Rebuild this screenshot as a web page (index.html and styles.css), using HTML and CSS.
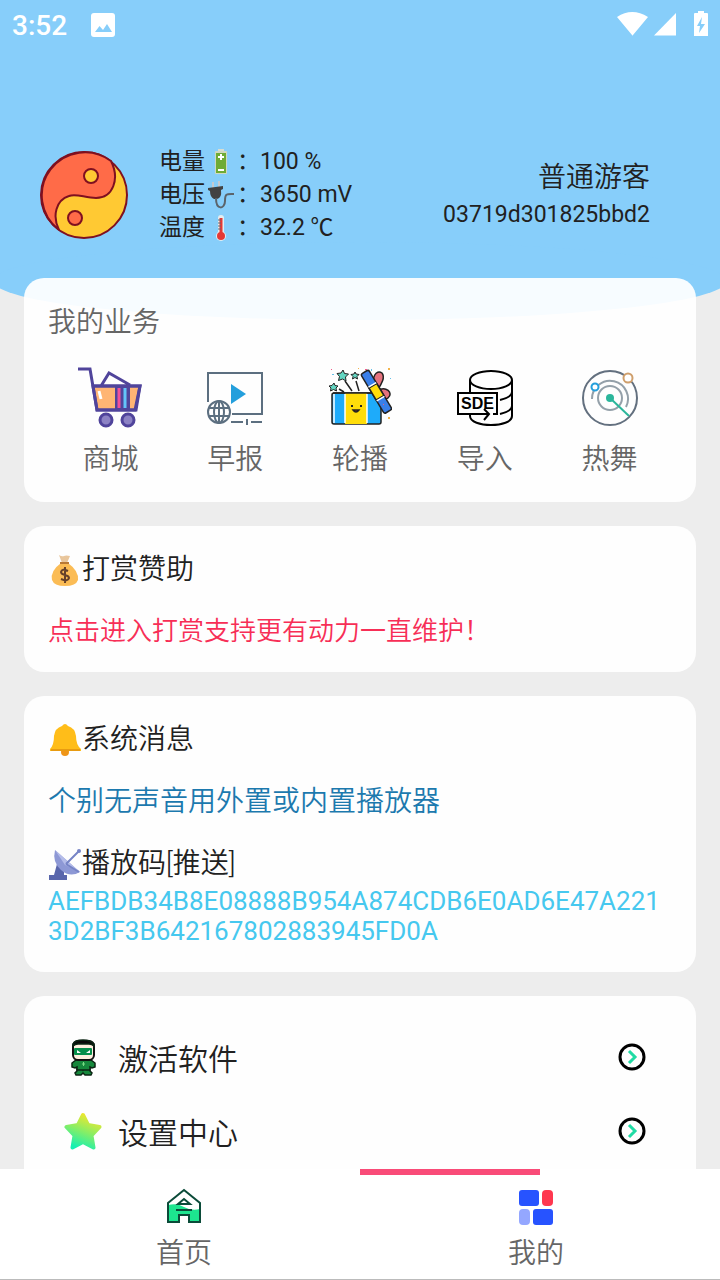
FILE: index.html
```html
<!DOCTYPE html>
<html lang="zh-CN">
<head>
    <meta charset="UTF-8">
    <meta name="viewport" content="width=device-width, initial-scale=1">
    <title>我的</title>
    <link rel="stylesheet" href="styles.css">
</head>
<body>
<main class="page">
    <header class="top">
        <div class="statusbar">
            <span class="clock">3:52</span>
            <svg class="pic" viewBox="0 0 24 24" width="24" height="24"><rect width="24" height="24" rx="3" fill="#fff"/><path d="M4 19l4.500-6 3.500 4 4-6 5 8z" fill="#87cefa"/></svg>
            <svg class="signals" viewBox="0 0 92 28" width="92" height="28" fill="#fff"><path d="M1 6Q16-4 32 6L17 24Q16.500 25 16 24z"/><path d="M60 2v22.500H38z"/><path d="M79 2h3V0h6v2h3q1 0 1 1v22H78V3q0-1 1-1z"/><path d="M86 6l-5 9h3l-1 7 6-9h-4l1-7z" fill="#87cefa"/></svg>
        </div>
        <div class="profile">
            <svg class="avatar" viewBox="0 0 88 88" width="88" height="88" stroke="#7f1020" stroke-width="2">
                <circle cx="44" cy="44" r="43" fill="#ffc933"/>
                <path d="M19 79A43 43 0 1 1 71 10C80 28 73 47 56 47C45 47 36 42 29 45C16 49 12 65 19 79z" fill="#ff6b48"/>
                <circle cx="51" cy="25" r="7" fill="#ffc933"/>
                <circle cx="35" cy="67" r="7" fill="#ff6b48"/>
            </svg>
            <dl class="stats">
                <div><dt>电量<svg viewBox="0 0 28 28" width="32" height="28"><rect x="11" y="1" width="6" height="3" fill="#d8ddd0"/><rect x="8" y="3" width="12" height="23" rx="1" fill="#cfd8c0"/><rect x="9" y="5" width="10" height="20" fill="#6fab35"/><path d="M14 6v6M11 9h6M11 22h6" stroke="#fff" stroke-width="2"/></svg>：</dt><dd>100 %</dd></div>
                <div><dt>电压<svg viewBox="0 0 28 28" width="32" height="28" fill="none"><path d="M6 1v7M12 0v7" stroke="#c5cbd0" stroke-width="2"/><path d="M1 7l15-2v3l-2 1q1 8-4 9H7q-4-2-4-8l-2-1z" fill="#424242"/><path d="M9 17c0 13 9 11 9 3 0-8 2-7 9-7" stroke="#5b646b" stroke-width="2"/></svg>：</dt><dd>3650 mV</dd></div>
                <div><dt>温度<svg viewBox="0 0 28 28" width="32" height="28"><rect x="11" y="1" width="6" height="22" rx="3" fill="#e4edf0"/><circle cx="14" cy="22" r="5" fill="#e4edf0"/><path d="M14 4v18" stroke="#e53935" stroke-width="3"/><circle cx="14" cy="22" r="4" fill="#e53935"/><path d="M11 6h3M11 9h3M11 12h3M11 15h3" stroke="#546e7a"/></svg>：</dt><dd>32.2 ℃</dd></div>
            </dl>
            <div class="user">
                <div class="name">普通游客</div>
                <div class="uid">03719d301825bbd2</div>
            </div>
        </div>
    </header>

    <div class="cards">
        <section class="card services">
            <h2>我的业务</h2>
            <nav class="grid">
                <a href="#shop">
                    <svg viewBox="0 0 64 64" width="64" height="64" stroke="#50449b" stroke-width="3" fill="none">
                        <path d="M15 20h47l-5 24H19z" fill="#ffb574"/><path d="M37 21h15v22H37z" fill="#50449b" stroke="none"/><path d="M41 22v20" stroke="#f0509b"/><path d="M47 22v20" stroke="#64c4fa"/>
                        <path d="M0 3h12l7 41h39l4-24H15M23 20l8-13 21 12"/><path d="M21 25l2 8" stroke="#fff"/><circle cx="28" cy="54" r="6" fill="#8c82c4"/><circle cx="50" cy="54" r="6" fill="#8c82c4"/>
                    </svg>
                    商城</a>
                <a href="#news">
                    <svg viewBox="0 0 64 64" width="64" height="64" fill="none" stroke="#5c6f80" stroke-width="2">
                        <path d="M5 36V7h54v41H29M28 56h12M48 56h11M44 53v6"/><path d="M28 18l15 10-15 10z" fill="#249fdc" stroke="none"/>
                        <circle cx="16" cy="46" r="11"/><ellipse cx="16" cy="46" rx="5" ry="11"/><path d="M16 35v22M6 42h20M6 50h20"/>
                    </svg>
                    早报</a>
                <a href="#carousel">
                    <svg viewBox="0 0 64 64" width="64" height="64" stroke="#222" stroke-width="1.500">
                        <path d="M47 20C43 12 48 3 54 7C58 12 52 20 49 25C58 19 66 27 60 32C55 36 48 29 47 24z" fill="#e5727e"/>
                        <rect x="4" y="27" width="49" height="31" rx="2" fill="#1eabfa"/><path d="M17 27h22v31H17z" fill="#ffdd0a" stroke="none"/><path d="M6 28v29M17 28v29M39 28v29" stroke="#fff"/><path d="M5 27h46"/>
                        <g transform="rotate(-31 48 26)"><rect x="44" y="3" width="9" height="46" rx="2" fill="#397fe9"/><path d="M44 19h9v14h-9z" fill="#ffdd0a"/><path d="M44 18h9M44 34h9" stroke="#fff"/></g>
                        <path d="M11 23l5 3M17 15l7 10M28 15l3 10"/><path d="M24 41v-2M33 41v-2" stroke-width="2"/><path d="M25 44h6q-3 4-6 0z" fill="#c52332"/>
                        <path d="M15 4l1.500 3.500 4 .5-3 3 .5 4-3.500-2-4 1.500 1-4-2.500-3 4-.5zM6 17l1 2.500 3 .5-2 2 .5 3-3-1.500-3 1.500.5-3-2-2 3-.5zM27 6l1 2 3 .5-2 2 .5 2.500-2.500-1.500-2.500 1.500.5-2.500-2-2 3-.5z" fill="#63d6c2" stroke-width="1"/>
                        <g stroke="none"><path d="M3 3h1v1H3zM37 3h2v1h-2zM55 38h1v1h-1z" fill="#ee5d8a"/><path d="M4 8h2v1H4zM43 3h1v2h-1zM62 12h1v1h-1z" fill="#65bfe8"/><path d="M60 2h2v2h-2zM60 51h2v2h-2zM30 2h1v1h-1z" fill="#f3b44a"/></g>
                    </svg>
                    轮播</a>
                <a href="#import">
                    <svg viewBox="0 0 64 64" width="64" height="64" fill="none" stroke="#000" stroke-width="2">
                        <ellipse cx="38" cy="14" rx="21" ry="9"/><path d="M17 14v12M59 14v36c0 12-42 12-42 0v-2M59 26q0 5-12 8M59 40q0 5-12 8"/><path d="M36 48H5V27h39v21h-4M31 43l5 5-5 6"/>
                        <text class="sde" x="8" y="43">SDE</text>
                    </svg>
                    导入</a>
                <a href="#dance">
                    <svg viewBox="0 0 64 64" width="64" height="64" fill="none" stroke="#94a0a9" stroke-width="2">
                        <circle cx="32" cy="32" r="27" stroke="#63707f"/><circle cx="32" cy="32" r="12"/><path d="M14 33A18 18 0 1 1 48 41"/>
                        <path d="M32 32l19 18" stroke="#2bb69b"/><circle cx="32" cy="32" r="4" fill="#2bb69b" stroke="none"/><circle cx="17" cy="21" r="3.500" fill="#fff" stroke="#249fdc"/><circle cx="50" cy="12" r="4.500" fill="#fff" stroke="#cf9f6c"/>
                    </svg>
                    热舞</a>
            </nav>
        </section>

        <section class="card">
            <h3><svg viewBox="0 0 34 34" width="34" height="34"><path d="M13 10Q2 18 4 27q2 6 13 6t13-6q1-9-10-17z" fill="#fbbc55"/><path d="M11 2q3 2 5 1t6 0l-3 7h-5z" fill="#e9c69c"/><path d="M12 10h9" stroke="#b97935" stroke-width="2"/><path d="M20 18q-6-3-7 1c0 4 8 2 8 6q-1 4-8 1M17 14v16" fill="none" stroke="#66412a" stroke-width="2"/></svg>打赏赞助</h3>
            <p><a class="sponsor" href="#sponsor">点击进入打赏支持更有动力一直维护！</a></p>
        </section>

        <section class="card">
            <h3><svg viewBox="0 0 34 34" width="34" height="34"><circle cx="17" cy="29" r="4" fill="#ef9518"/><path d="M14 3q3-4 6 0 7 2 8 10 0 9 5 13v2H2v-2q4-4 4-13 1-8 8-10z" fill="#ffbd19"/><path d="M3 27h29" stroke="#e89b11" stroke-width="2"/></svg>系统消息</h3>
            <p class="notice">个别无声音用外置或内置播放器</p>
            <h3><svg viewBox="0 0 34 34" width="34" height="34"><path d="M9 17h7v11h3v5H1v-5h5z" fill="#5966ac"/><path d="M7 3l25 22q-10 6-19-2T7 3z" fill="#8d98d5"/><path d="M7 3l25 22-15-7z" fill="#b4bce9"/><path d="M18 17L31 4M18 17l13 8" stroke="#7684c6" stroke-width="2"/><circle cx="31" cy="4" r="2" fill="#7684c6"/></svg>播放码[推送]</h3>
            <p class="code">AEFBDB34B8E08888B954A874CDB6E0AD6E47A2213D2BF3B642167802883945FD0A</p>
        </section>

        <section class="card menu">
            <a href="#activate">
                <svg viewBox="0 0 38 38" width="38" height="38" stroke="#0b2413" stroke-width="1.500">
                    <path d="M13 30h5l1 2 1-2h6v3l2 2-1 2h-6l-2-2-2 2h-5l-1-2 2-2z" fill="#16883c"/>
                    <path d="M12 22h15l4 3v4l-3 1-2-1v3H13v-3l-2 1-3-1v-4z" fill="#16883c"/>
                    <rect x="9" y="3" width="21" height="19" rx="5" fill="#fff0df" stroke="#111" stroke-width="2"/>
                    <path d="M9 8V6q2-4 10-4t11 4v2q-2-2-5-2H14q-3 0-5 2z" fill="#090909"/>
                    <rect x="10" y="10" width="18" height="7" rx="1" fill="#07904c" stroke="none"/>
                    <path d="M13 12l4 3h-4zM26 12l-4 3h4z" fill="#fff" stroke="none"/><path d="M18 26h3M19.500 24v4" stroke="#78db83" stroke-width="1"/>
                </svg>
                <span>激活软件</span>
                <svg class="go" viewBox="0 0 28 28" width="28" height="28" fill="none" stroke-width="3"><circle cx="14" cy="14" r="12" stroke="#000"/><path d="M11 8l6 6-6 6" stroke="#20dba4"/></svg>
            </a>
            <a href="#settings">
                <svg viewBox="0 0 38 38" width="38" height="38"><defs><linearGradient id="star" x1=".7" y1="0" x2=".3" y2="1"><stop stop-color="#f2e72b"/><stop offset=".5" stop-color="#86ee66"/><stop offset="1" stop-color="#14f0b2"/></linearGradient></defs><path d="M19 3l5 10 11.500 2-8 8.500 2 12L19 30 8.500 35.500l2-12L2.500 15 14 13z" fill="url(#star)" stroke="url(#star)" stroke-width="4" stroke-linejoin="round"/></svg>
                <span>设置中心</span>
                <svg class="go" viewBox="0 0 28 28" width="28" height="28" fill="none" stroke-width="3"><circle cx="14" cy="14" r="12" stroke="#000"/><path d="M11 8l6 6-6 6" stroke="#20dba4"/></svg>
            </a>
        </section>
    </div>
</main>

<nav class="tabs">
    <a href="#home">
        <svg viewBox="0 0 38 38" width="38" height="38"><path d="M3 18q10-2 16 2 7 4 16 2v13H24v-7H14v7H3z" fill="#1de58f"/><path d="M3 35V16L19 3l16 13v19H24v-7H14v7zM13 17l6-5 6 5zM11 23h16" fill="none" stroke="#0b4b39" stroke-width="2"/></svg>
        首页</a>
    <a href="#mine" class="active">
        <svg viewBox="0 0 38 38" width="38" height="38"><rect x="2" y="3" width="20" height="16" rx="3" fill="#2753ff"/><rect x="25" y="3" width="11" height="16" rx="4" fill="#ff374f"/><rect x="2" y="22" width="11" height="16" rx="4" fill="#94a7ff"/><rect x="16" y="22" width="20" height="16" rx="3" fill="#2753ff"/></svg>
        我的</a>
</nav>
</body>
</html>
```
FILE: styles.css
```css
* {
    box-sizing: border-box;
}
body {
    margin: 0;
    height: 100vh;
    display: flex;
    flex-direction: column;
    background: #ededed;
    color: #212121;
    font-family: Roboto, "Noto Sans CJK SC", sans-serif;
    font-weight: 400;
}
h2, h3, p, dl, dd {
    margin: 0;
    font-weight: inherit;
}
a {
    color: inherit;
    text-decoration: none;
}
svg {
    display: block;
    flex: none;
}
.page {
    flex: 1;
    min-height: 0;
    overflow-y: auto;
    scrollbar-width: none;
}

/* blue header with the curved bottom edge */
.top {
    position: relative;
    height: 320px;
    overflow: hidden;
    background: linear-gradient(#87cefa, #87cefa) no-repeat 0 0 / 100% 281px;
}
.top::after {
    content: "";
    position: absolute;
    left: -1%;
    right: -1%;
    bottom: 0;
    height: 78px;
    border-radius: 50%;
    background: #87cefa;
}
.statusbar {
    display: flex;
    align-items: center;
    height: 50px;
    padding: 0 12px;
    color: #fff;
}
.clock {
    font-size: 28px;
    font-weight: 500;
}
.pic {
    margin-left: 24px;
}
.signals {
    margin-left: auto;
}
.profile {
    display: flex;
    align-items: center;
    padding: 95px 70px 0 40px;
}
.stats {
    margin-left: 31px;
    font-size: 23px;
    line-height: 33px;
}
.stats div, .stats dt {
    display: flex;
    align-items: center;
}
.user {
    margin-left: auto;
    text-align: right;
}
.name {
    font-size: 28px;
    line-height: 40px;
}
.uid {
    font-size: 23px;
    line-height: 33px;
}

.cards {
    position: relative;
    display: flex;
    flex-direction: column;
    gap: 24px;
    margin-top: -42px;
    padding: 0 24px 24px;
}
.card {
    padding: 24px;
    border-radius: 20px;
    background: rgba(255, 255, 255, 0.93);
}
.services {
    padding-bottom: 12px;
    color: #666;
    font-size: 28px;
}
.services h2 {
    font-size: 28px;
    line-height: 42px;
}
.grid {
    display: grid;
    grid-template-columns: repeat(5, 1fr);
    margin-top: 22px;
}
.grid a {
    display: flex;
    flex-direction: column;
    align-items: center;
    line-height: 60px;
}
.sde {
    font: 700 16px "Liberation Sans", sans-serif;
    fill: #000;
    stroke: none;
}
.card h3 {
    display: flex;
    align-items: center;
    font-size: 28px;
    line-height: 40px;
}
.card p {
    margin-top: 24px;
    font-size: 26px;
    line-height: 34px;
}
.sponsor {
    color: #f72e56;
}
.card .notice {
    margin-bottom: 24px;
    color: #1c79ae;
    font-size: 28px;
    line-height: 36px;
}
.card .code {
    margin: 2px 0;
    color: #46c8ef;
    line-height: 30px;
    word-break: break-all;
}
.name, .services, .card h3, .sponsor, .notice, .menu, .tabs {
    font-weight: 350;
}
.menu a {
    display: flex;
    align-items: center;
    height: 74px;
    padding: 0 26px 0 16px;
    font-size: 30px;
}
.menu span {
    margin-left: 16px;
}
.go {
    margin-left: auto;
}

.tabs {
    display: grid;
    grid-template-columns: 1fr 1fr;
    padding: 0 8px;
    border-bottom: 1px solid #bbb;
    background: #fff;
    color: #666;
    font-size: 28px;
}
.tabs a {
    position: relative;
    display: flex;
    flex-direction: column;
    align-items: center;
    gap: 4px;
    padding-top: 18px;
    line-height: 50px;
}
.tabs .active::before {
    content: "";
    position: absolute;
    top: 0;
    left: 0;
    width: calc(50% + 4px);
    height: 6px;
    background: #f94b78;
}
```
